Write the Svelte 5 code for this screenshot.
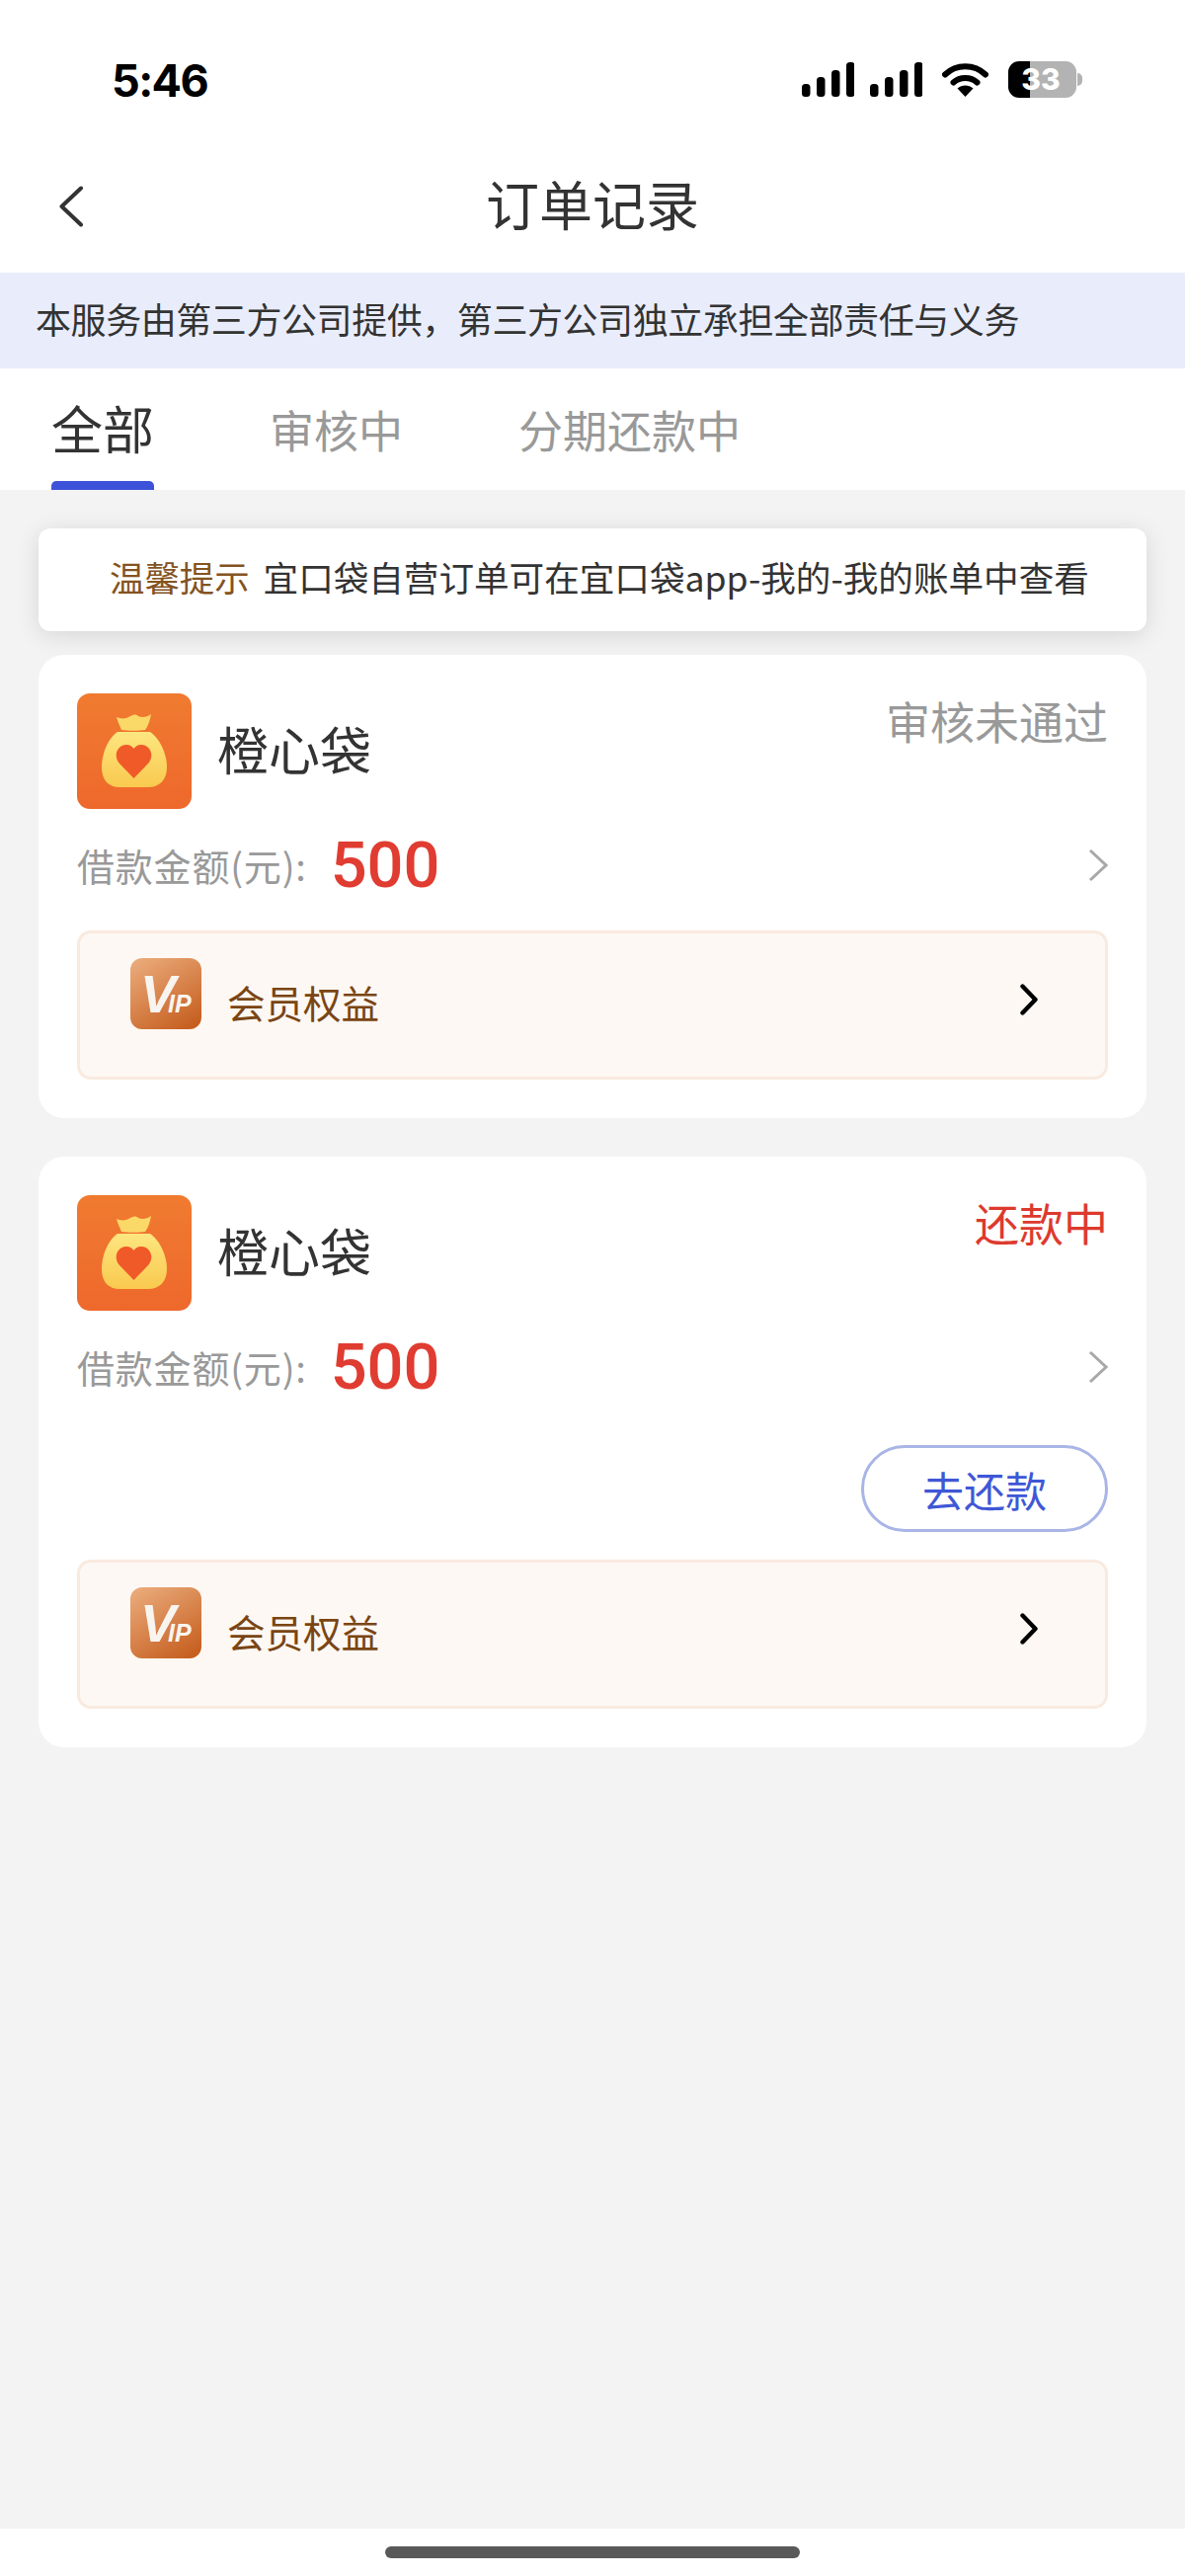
<script>
	const tabs = [
		{ label: '全部', active: true },
		{ label: '审核中', active: false },
		{ label: '分期还款中', active: false }
	];

	const orders = [
		{ id: 1, status: '审核未通过', statusClass: 'muted', canRepay: false },
		{ id: 2, status: '还款中', statusClass: 'danger', canRepay: true }
	];

	// signal bars, x and height in the icon's own box
	const bars = [
		{ x: 0, h: 13 },
		{ x: 15, h: 20 },
		{ x: 30, h: 27 },
		{ x: 45, h: 35 }
	];
</script>

<div class="page">
	<header>
		<div class="status-bar">
			<span class="time">5:46</span>
			<div class="indicators">
				{#each [0, 1] as n (n)}
					<svg class="signal" width="53" height="35" viewBox="0 0 53 35">
						{#each bars as bar}
							<rect x={bar.x} y={35 - bar.h} width="8.5" height={bar.h} rx="3.5" fill="#000"></rect>
						{/each}
					</svg>
				{/each}
				<svg class="wifi" width="47" height="35" viewBox="0 0 47 35">
					<path d="M3 12.5C14.5 1.5 32.5 1.5 44 12.5" fill="none" stroke="#000" stroke-width="6" stroke-linecap="round"></path>
					<path d="M11.5 20.5C18 14.5 29 14.5 35.5 20.5" fill="none" stroke="#000" stroke-width="6" stroke-linecap="round"></path>
					<path d="M15.5 26.5C20 22.5 27 22.5 31.5 26.5L23.5 35Z" fill="#000"></path>
				</svg>
				<div class="battery">
					<span>33</span>
				</div>
				<div class="battery-nub"></div>
			</div>
		</div>

		<nav>
			<svg class="back" width="26" height="42" viewBox="0 0 26 42">
				<path d="M23 2.5L3.5 21L23 39.5" fill="none" stroke="#333" stroke-width="4" stroke-linecap="round" stroke-linejoin="round"></path>
			</svg>
			<h1>订单记录</h1>
		</nav>
	</header>

	<div class="notice">本服务由第三方公司提供，第三方公司独立承担全部责任与义务</div>

	<div class="tabs">
		{#each tabs as tab}
			<div class="tab" class:active={tab.active}>{tab.label}</div>
		{/each}
	</div>

	<main>
		<div class="tip">
			<span class="tip-label">温馨提示</span>
			<span class="tip-text">宜口袋自营订单可在宜口袋app-我的-我的账单中查看</span>
		</div>

		{#each orders as order (order.id)}
			<section class="card">
				<div class="card-head">
					<svg class="logo" width="116" height="117" viewBox="0 0 116 117">
						<defs>
							<linearGradient id="logo-bg-{order.id}" x1="0" y1="0" x2="0" y2="1">
								<stop offset="0" stop-color="#f07b30"></stop>
								<stop offset="1" stop-color="#ee682c"></stop>
							</linearGradient>
							<linearGradient id="bag-{order.id}" x1="0" y1="0" x2="0" y2="1">
								<stop offset="0" stop-color="#fde680"></stop>
								<stop offset="1" stop-color="#f9c94e"></stop>
							</linearGradient>
						</defs>
						<rect width="116" height="117" rx="13" fill="url(#logo-bg-{order.id})"></rect>
						<path d="M40 24C44 26 50 26 54 23C57 21 60 21 62 23C66 25 71 24 75 21C74 27 72 33 69 37C62 38 52 38 45 37C43 32 41 28 40 24Z" fill="#fbd968"></path>
						<path d="M41 39H74C83 45 91 60 91 75C91 88 83 95 72 95H43C32 95 25 88 25 75C25 60 32 45 41 39Z" fill="url(#bag-{order.id})"></path>
						<path d="M57.5 86L43 71C36 63 41 52 50 52C54 52 56 54 57.5 56C59 54 61 52 65 52C74 52 79 63 72 71Z" fill="#f05a28"></path>
					</svg>
					<span class="name">橙心袋</span>
					<span class="status {order.statusClass}">{order.status}</span>
				</div>

				<div class="amount-row">
					<span class="amount-label">借款金额(元):</span>
					<span class="amount">500</span>
					<svg class="arrow" width="20" height="34" viewBox="0 0 20 34">
						<path d="M2 2L18 17L2 32" fill="none" stroke="#a8a8a8" stroke-width="3"></path>
					</svg>
				</div>

				{#if order.canRepay}
					<div class="actions">
						<button>去还款</button>
					</div>
				{/if}

				<div class="vip" class:tight={order.canRepay}>
					<svg class="vip-icon" width="72" height="72" viewBox="0 0 72 72">
						<defs>
							<linearGradient id="vip-bg-{order.id}" x1="0.2" y1="0" x2="0.8" y2="1">
								<stop offset="0" stop-color="#e9a877"></stop>
								<stop offset="1" stop-color="#c65f20"></stop>
							</linearGradient>
						</defs>
						<rect width="72" height="72" rx="12" fill="url(#vip-bg-{order.id})"></rect>
						<text class="vip-mark" x="10" y="55"><tspan class="vip-v">V</tspan><tspan class="vip-ip">IP</tspan></text>
					</svg>
					<span class="vip-label">会员权益</span>
					<svg class="vip-arrow" width="18" height="32" viewBox="0 0 18 32">
						<path d="M2.5 2.5L15.5 16L2.5 29.5" fill="none" stroke="#000" stroke-width="4.4" stroke-linecap="round" stroke-linejoin="round"></path>
					</svg>
				</div>
			</section>
		{/each}
	</main>

	<footer>
		<div class="home-bar"></div>
	</footer>
</div>

<style>
	:global(body) {
		margin: 0;
		background: #fff;
	}

	.page {
		display: flex;
		flex-direction: column;
		min-height: 2608px;
		font-family: "Noto Sans CJK SC", "Noto Sans", sans-serif;
		color: #333;
	}

	.status-bar {
		display: flex;
		justify-content: space-between;
		align-items: flex-start;
		height: 142px;
		box-sizing: border-box;
		padding: 62px 104px 0 113px;
	}

	.time {
		font-family: Inter, sans-serif;
		font-weight: 700;
		font-size: 45px;
		letter-spacing: -1.6px;
		line-height: 40px;
		color: #000;
	}

	.indicators {
		display: flex;
		align-items: flex-start;
	}

	.signal {
		margin: 1px 16px 0 0;
	}

	.signal:nth-child(2) {
		margin-right: 20px;
	}

	.wifi {
		margin: 1px 20px 0 0;
	}

	.battery {
		width: 69px;
		height: 37px;
		padding-right: 3px;
		box-sizing: border-box;
		border-radius: 11px;
		background: linear-gradient(to right, #000 22px, #b3b3b3 22px);
		display: flex;
		align-items: center;
		justify-content: center;
	}

	.battery span {
		font-family: Inter, sans-serif;
		font-weight: 800;
		font-size: 30px;
		line-height: 37px;
		color: #fff;
	}

	.battery-nub {
		width: 5px;
		height: 13px;
		margin: 12px 0 0 1px;
		border-radius: 0 5px 5px 0;
		background: #b3b3b3;
	}

	nav {
		position: relative;
		display: flex;
		justify-content: center;
		align-items: center;
		height: 134px;
	}

	.back {
		position: absolute;
		left: 59px;
		top: 46px;
	}

	h1 {
		margin: 0 0 6px;
		font-size: 54px;
		font-weight: 400;
		line-height: 60px;
		color: #333;
	}

	.notice {
		height: 97px;
		padding-left: 36px;
		background: #e9edfb;
		font-size: 36px;
		letter-spacing: -0.43px;
		line-height: 93px;
		color: #333;
	}

	.tabs {
		display: flex;
		align-items: center;
		gap: 117px;
		height: 123px;
		padding-left: 52px;
	}

	.tab {
		position: relative;
		height: 123px;
		font-size: 45px;
		line-height: 124px;
		color: #999;
	}

	.tab.active {
		font-size: 52px;
		line-height: 120px;
		color: #333;
	}

	.tab.active::after {
		content: '';
		position: absolute;
		left: 0;
		right: 0;
		bottom: 0;
		height: 9px;
		border-radius: 5px 5px 0 0;
		background: #3b52d9;
	}

	main {
		flex: 1;
		display: flex;
		flex-direction: column;
		padding: 39px 39px 0;
		background: #f3f3f3;
	}

	.tip {
		display: flex;
		align-items: center;
		height: 104px;
		padding: 0 0 7px 72px;
		box-sizing: border-box;
		margin-bottom: 24px;
		border-radius: 12px;
		background: #fff;
		box-shadow: 0 4px 24px rgba(0, 0, 0, 0.12);
		white-space: nowrap;
	}

	.tip-label {
		color: #84531f;
		font-size: 35.4px;
		margin-right: 14px;
	}

	.tip-text {
		color: #333;
		font-size: 35.6px;
	}

	.card {
		box-sizing: border-box;
		padding: 39px;
		margin-bottom: 39px;
		border-radius: 26px;
		background: #fff;
	}

	.card-head {
		display: flex;
		align-items: center;
		height: 117px;
	}

	.logo {
		flex: none;
	}

	.name {
		margin: 0 0 5px 26px;
		font-size: 52px;
		line-height: 60px;
		color: #333;
	}

	.status {
		align-self: flex-start;
		margin: 3px 0 0 auto;
		font-size: 45px;
		line-height: 50px;
	}

	.status.muted {
		color: #999;
	}

	.status.danger {
		color: #dd3a2e;
	}

	.amount-row {
		display: flex;
		align-items: center;
		height: 46px;
		margin-top: 34px;
	}

	.amount-label {
		font-size: 38px;
		letter-spacing: 0.8px;
		line-height: 46px;
		color: #999;
	}

	.amount {
		margin-left: 24px;
		font-family: Roboto, sans-serif;
		font-weight: 500;
		font-size: 65px;
		line-height: 46px;
		color: #e03c31;
	}

	.arrow {
		margin-left: auto;
	}

	.actions {
		display: flex;
		justify-content: flex-end;
		margin-top: 56px;
	}

	button {
		width: 250px;
		height: 88px;
		padding: 0;
		border: 3px solid #a9b5e6;
		border-radius: 44px;
		background: #fff;
		font-family: inherit;
		font-size: 42px;
		color: #3f57d6;
	}

	.vip {
		display: flex;
		align-items: flex-start;
		box-sizing: border-box;
		height: 151px;
		margin-top: 43px;
		padding: 25px 68px 0 51px;
		border: 3px solid #f9eadf;
		border-radius: 14px;
		background: #fdf8f3;
	}

	.vip.tight {
		margin-top: 28px;
	}

	.vip-icon {
		flex: none;
	}

	.vip-mark {
		font-family: "Liberation Sans", sans-serif;
		font-weight: 700;
		font-style: italic;
		fill: #f8f4ef;
	}

	.vip-v {
		font-size: 54px;
		letter-spacing: -8px;
	}

	.vip-ip {
		font-size: 25px;
	}

	.vip-label {
		margin: 21px 0 0 26px;
		font-size: 38.5px;
		line-height: 46px;
		color: #7a4513;
	}

	.vip-arrow {
		margin: 26px 0 0 auto;
	}

	footer {
		display: flex;
		justify-content: center;
		height: 48px;
		background: #fff;
	}

	.home-bar {
		width: 420px;
		height: 12px;
		margin-top: 18px;
		border-radius: 6px;
		background: #595959;
	}
</style>
